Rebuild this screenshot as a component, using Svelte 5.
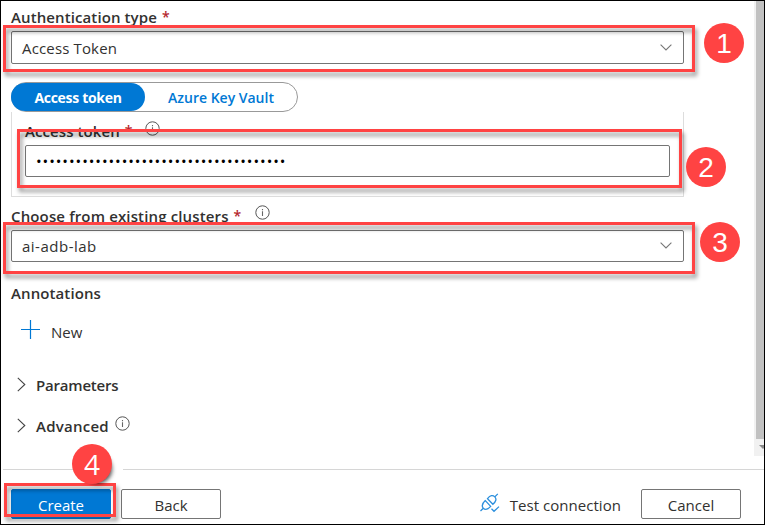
<script>
  const tokenMask = '•'.repeat(38);
  const callouts = [
    { n: 1, x: 704, y: 23 },
    { n: 2, x: 686, y: 147 },
    { n: 3, x: 700, y: 222 },
    { n: 4, x: 72, y: 444 }
  ];
  const outlines = [
    { x: 3, y: 25, w: 692, h: 47 },
    { x: 17, y: 129, w: 665, h: 59 },
    { x: 3, y: 222, w: 692, h: 52 },
    { x: 4, y: 483, w: 112, h: 34 }
  ];
</script>

{#snippet info()}
  <svg class="info" width="15" height="15" viewBox="0 0 15 15">
    <circle cx="7.5" cy="7.5" r="6.7" fill="none" stroke="#555" stroke-width="1" />
    <path d="M7.5 6.3V11M7.5 4V5.2" stroke="#666" stroke-width="1.1" />
  </svg>
{/snippet}

{#snippet down()}
  <svg width="12" height="7" viewBox="0 0 12 7"><path d="M.6.6 6 6 11.4.6" fill="none" stroke="#777" stroke-width="1.1" /></svg>
{/snippet}

{#snippet right()}
  <svg width="9" height="15" viewBox="0 0 9 15"><path d="M.8.8 7.8 7.5.8 14.2" fill="none" stroke="#444" stroke-width="1.1" /></svg>
{/snippet}

<div class="frame">
  <div class="main">
    <div class="form">
      <div class="label auth"><span class="t-auth">Authentication type</span><i>*</i></div>
      <div class="select first"><span class="t-token">Access Token</span>{@render down()}</div>
      <div class="tabs">
        <button class="active"><span>Access token</span></button>
        <button class="vault"><span>Azure Key Vault</span></button>
      </div>
      <div class="panel">
        <div class="label"><span class="t-acc">Access token</span><i>*</i>{@render info()}</div>
        <div class="input"><span class="dots">{tokenMask}</span></div>
      </div>
      <div class="label choose"><span class="t-choose">Choose from existing clusters</span><i>*</i>{@render info()}</div>
      <div class="select second"><span class="t-lab">ai-adb-lab</span>{@render down()}</div>
      <div class="label annotations"><span class="t-ann">Annotations</span></div>
      <div class="new">
        <svg width="19" height="19" viewBox="0 0 19 19"><path d="M9.5 0V19M0 9.5H19" stroke="#0078d4" stroke-width="1.2" /></svg>
        <span class="t-new">New</span>
      </div>
      <div class="section">{@render right()}<span class="t-par">Parameters</span></div>
      <div class="section adv">{@render right()}<span class="t-adv">Advanced</span>{@render info()}</div>
    </div>
    <div class="scroll"><div class="thumb"></div><div class="arrow"></div></div>
  </div>
  <div class="rule"><span></span><span></span></div>
  <div class="footer">
    <button class="btn primary"><span>Create</span></button>
    <button class="btn"><span class="t-back">Back</span></button>
    <div class="test">
      <svg width="20" height="20" viewBox="0 0 20 20" fill="none" stroke="#2b8fdd" stroke-width="1.3">
        <path d="M.5 18 3.3 15.2M14.8 3.9 17.8.9" />
        <path d="M3.3 15.2C1.4 13 2 10.6 5.3 7.6L10.7 13.4C7.8 16.4 5.3 17.2 3.3 15.2ZM7.5 5.6C10.3 2.2 12.8 1.9 14.8 3.9 16.8 5.9 16.1 8.4 12.9 11.3Z" />
        <path d="M11.5 15.8 14 18.3 19 13.6" />
      </svg>
      <span class="t-test">Test connection</span>
    </div>
    <button class="btn"><span class="t-cancel">Cancel</span></button>
  </div>

  {#each outlines as o}
    <div class="outline" style="left:{o.x}px;top:{o.y}px;width:{o.w}px;height:{o.h}px"></div>
  {/each}
  {#each callouts as c}
    <div class="callout" class:raised={c.n === 4} style="left:{c.x}px;top:{c.y}px">{c.n}</div>
  {/each}
</div>

<style>
  .frame {
    position: relative;
    box-sizing: border-box;
    width: 765px;
    height: 525px;
    display: flex;
    flex-direction: column;
    background: #fff;
    color: #323130;
    font: 15px/20px 'Open Sans', 'Noto Sans', sans-serif;
    overflow: hidden;
  }
  .frame::after {
    content: '';
    position: absolute;
    inset: 0;
    border: 1px solid #000;
  }
  span { white-space: nowrap; }
  svg { display: block; flex: none; }
  .main { display: flex; height: 469px; }
  .form { width: 673px; padding: 7px 0 0 11px; }
  .label { display: flex; align-items: center; height: 20px; font-weight: 600; }
  .label i { color: #b4262c; font-size: 14px; font-style: normal; margin-left: 5px; font-weight: 600; }
  .label .info { margin: -7px 0 0 14px; }
  .t-auth { letter-spacing: 0.1px; }
  .t-token { letter-spacing: 0.15px; }
  .t-acc { letter-spacing: 0.08px; }
  .t-choose { letter-spacing: 0.14px; }
  .t-lab { letter-spacing: 0.5px; }
  .t-ann { letter-spacing: 0.1px; }
  .t-par { letter-spacing: -0.2px; }
  .t-adv { letter-spacing: 0.25px; }
  .select, .input {
    box-sizing: border-box;
    display: flex;
    align-items: center;
    justify-content: space-between;
    border: 1px solid #757575;
    border-radius: 2px;
    padding: 0 11px 0 10px;
    height: 32px;
  }
  .select svg { margin-top: -1px; }
  .select.first { height: 33px; margin-top: 4px; }
  .tabs {
    box-sizing: border-box;
    display: flex;
    align-items: center;
    width: 287px;
    height: 30px;
    margin-top: 18px;
    border: 1px solid #999;
    border-radius: 15px;
  }
  .tabs button {
    height: 28px;
    padding: 0;
    border: 0;
    border-radius: 14px;
    background: none;
    color: #0078d4;
    font: 600 14px/30px 'Open Sans', 'Noto Sans', sans-serif;
  }
  .tabs .active { width: 134px; margin-left: -1px; background: #0078d4; color: #fff; font-weight: 700; letter-spacing: -0.3px; }
  .tabs .vault { width: 152px; }
  .panel {
    box-sizing: border-box;
    height: 85px;
    padding: 9px 13px 0;
    border: solid #ddd;
    border-width: 0 1px 1px;
  }
  .panel .info { margin: -6px 0 0 13px; }
  .input { margin-top: 4px; }
  .dots { font-size: 15px; letter-spacing: 0.95px; color: #000; }
  .choose { margin-top: 9px; }
  .second { margin-top: 4px; }
  .annotations { margin-top: 21px; }
  .new { display: flex; align-items: center; gap: 11px; height: 24px; margin: 17px 0 0 10px; }
  .new svg { margin-top: -5px; }
  .section { display: flex; align-items: center; gap: 10px; height: 20px; margin: 31px 0 0 6px; font-weight: 600; }
  .section svg { margin-top: -2px; }
  .section .info { margin: -5px 0 0 -4px; }
  .adv { margin-top: 21px; }
  .scroll { width: 10px; margin-left: 70px; height: 456px; background: #f1f1f1; display: flex; flex-direction: column; }
  .thumb { height: 439px; margin-left: 2px; background: #c1c1c1; }
  .arrow { width: 0; margin: 6px 0 0 5px; border: 4px solid transparent; border-top-color: #8a8a8a; border-bottom: 0; }
  .rule { display: flex; height: 1px; padding-left: 3px; }
  .rule span { width: 72px; background: #d6d6d6; }
  .rule span + span { flex: 1; margin-left: 48px; }
  .footer { display: flex; align-items: center; gap: 10px; padding: 19px 24px 0 11px; }
  .btn {
    box-sizing: border-box;
    width: 100px;
    height: 30px;
    padding: 2px 0 0;
    border: 1px solid #757575;
    border-radius: 2px;
    background: #fff;
    color: #323130;
    font: 15px/24px 'Open Sans', 'Noto Sans', sans-serif;
  }
  .primary { background: #0078d4; border-color: #0078d4; color: #fff; }
  .test { display: flex; align-items: center; gap: 10px; margin: 0 10px 0 auto; }
  .test svg { margin-top: -3px; }
  .test span { padding-top: 1px; letter-spacing: 0.04px; }
  .outline {
    position: absolute;
    box-sizing: border-box;
    border: 3px solid #ff4343;
    filter: drop-shadow(2px 4px 2px rgba(0, 0, 0, 0.42));
  }
  .callout {
    position: absolute;
    width: 40px;
    height: 40px;
    border-radius: 50%;
    background: #ff4343;
    color: #fff;
    font: 28px/41px 'Liberation Sans', sans-serif;
    text-align: center;
  }
  .raised { font-family: 'Open Sans', 'Noto Sans', sans-serif; box-shadow: 5px 5px 4px -5px rgba(0, 0, 0, 0.7); }
</style>
